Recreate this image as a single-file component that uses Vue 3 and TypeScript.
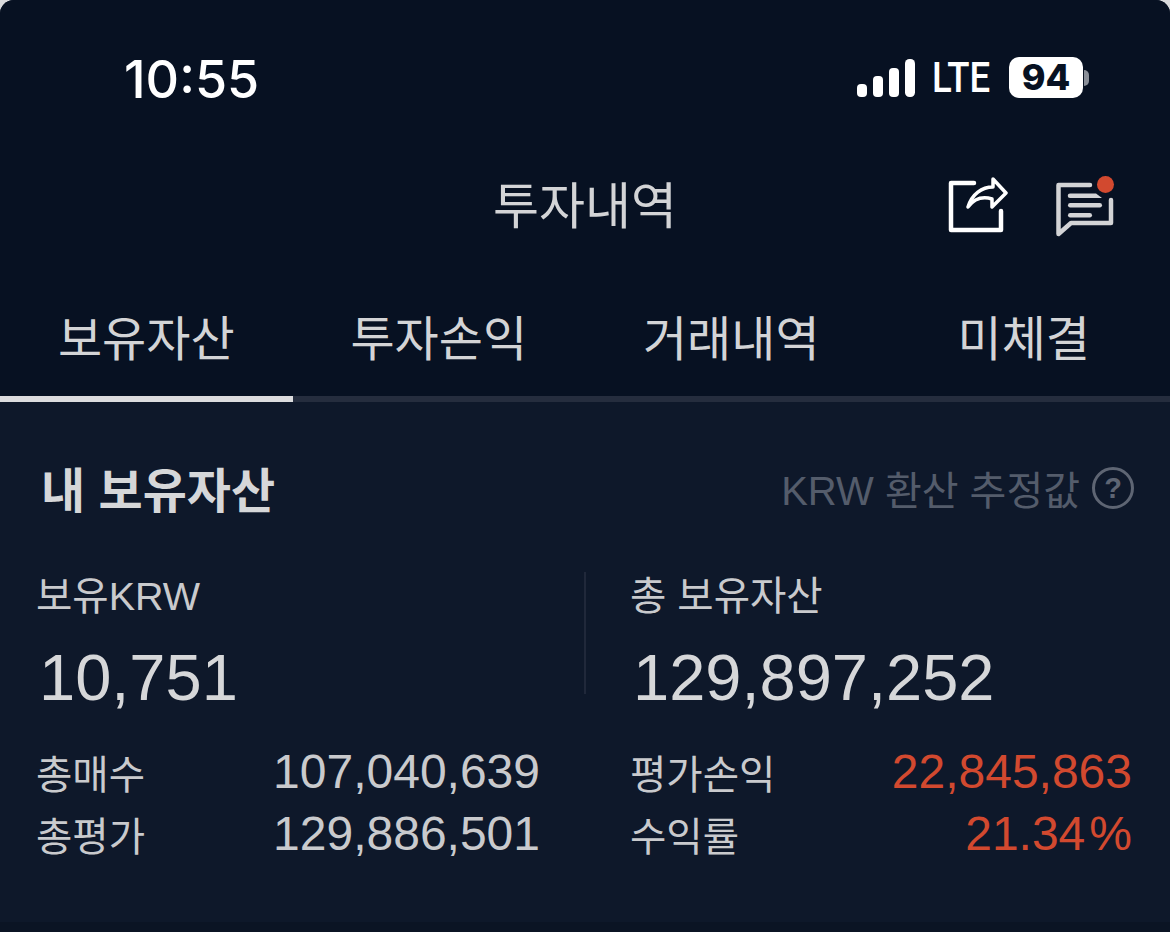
<template>
  <div class="screen">
    <header class="top">
      <div class="status">
        <span class="time">10:55</span>
        <div class="status-right">
          <svg class="signal" width="58" height="38" viewBox="0 0 58 38">
            <rect x="0" y="25" width="10" height="13" rx="4" />
            <rect x="16" y="17" width="10" height="21" rx="4" />
            <rect x="32" y="9" width="10" height="29" rx="4" />
            <rect x="48" y="0" width="10" height="38" rx="4.5" />
          </svg>
          <span class="lte">LTE</span>
          <div class="battery">
            <span class="level">94</span>
            <span class="nub"></span>
          </div>
        </div>
      </div>

      <div class="title-row">
        <h1 class="title">투자내역</h1>
        <div class="actions">
          <svg class="share" width="62" height="58" viewBox="0 0 62 58" fill="none" stroke="#fff" stroke-linecap="round" stroke-linejoin="round">
            <path d="M28 7H5v47h50V35" stroke-width="4.5" />
            <path d="M47 3L60 17 46 31V23C36 20 28 23 22 31 26 18 36 11 47 11z" stroke-width="3.5" />
          </svg>
          <div class="chat">
            <svg width="60" height="62" viewBox="0 0 60 62" fill="none">
              <path d="M36 9H4.5V58L17 47H57V24" stroke="#d3d4d6" stroke-width="4.5" stroke-linecap="round" stroke-linejoin="round" />
              <path d="M16 17.5h26l6 4.5H16a2.2 2.2 0 0 1 0-4.5z" fill="#d3d4d6" />
              <rect x="14" y="27" width="34" height="4.5" rx="2.2" fill="#d3d4d6" />
              <rect x="14" y="37" width="24" height="4.5" rx="2.2" fill="#d3d4d6" />
            </svg>
            <span class="dot"></span>
          </div>
        </div>
      </div>

      <nav class="tabs">
        <div
          v-for="(tab, i) in tabs"
          :key="tab"
          class="tab"
          :class="{ active: i === 0 }"
        >{{ tab }}</div>
      </nav>
    </header>

    <main class="content">
      <div class="section-head">
        <h2 class="section-title">내 보유자산</h2>
        <div class="hint">
          <span>KRW 환산 추정값</span>
          <span class="help">?</span>
        </div>
      </div>

      <div class="columns">
        <section class="col col-left">
          <div class="label">보유KRW</div>
          <div class="big">10,751</div>
          <div class="rows">
            <div v-for="row in leftRows" :key="row.name" class="row">
              <span class="row-name">{{ row.name }}</span>
              <span class="row-value">{{ row.value }}</span>
            </div>
          </div>
        </section>
        <section class="col col-right">
          <div class="label">총 보유자산</div>
          <div class="big">129,897,252</div>
          <div class="rows">
            <div v-for="row in rightRows" :key="row.name" class="row">
              <span class="row-name">{{ row.name }}</span>
              <span class="row-value up">{{ row.value }}</span>
            </div>
          </div>
        </section>
        <div class="divider"></div>
      </div>
    </main>
    <div class="bottom-edge"></div>
  </div>
</template>

<script setup lang="ts">
const tabs = ["보유자산", "투자손익", "거래내역", "미체결"]

const leftRows = [
  { name: "총매수", value: "107,040,639" },
  { name: "총평가", value: "129,886,501" },
]

const rightRows = [
  { name: "평가손익", value: "22,845,863" },
  { name: "수익률", value: "21.34\u200a%" },
]
</script>

<style>
html,
body {
  margin: 0;
  background: #d9dadc;
}
</style>

<style scoped>
.screen {
  width: 1170px;
  height: 932px;
  overflow: hidden;
  display: flex;
  flex-direction: column;
  background: #0e182a;
  border-radius: 14px 14px 0 0;
  font-family: "Liberation Sans", "Noto Sans CJK KR", sans-serif;
  color: #d6d7d9;
}

.top {
  height: 402px;
  flex: none;
  display: flex;
  flex-direction: column;
  background: #071122;
}

.status {
  height: 148px;
  flex: none;
  display: flex;
  justify-content: space-between;
  align-items: flex-start;
  padding: 54px 81px 0 124px;
  box-sizing: border-box;
}

.time {
  font-family: Inter, sans-serif;
  font-size: 52px;
  line-height: 52px;
  font-weight: 500;
  color: #fff;
}

.status-right {
  display: flex;
  align-items: center;
  padding-top: 3px;
}

.signal {
  fill: #fff;
  margin-right: 17px;
}

.lte {
  font-family: Roboto, sans-serif;
  font-weight: 500;
  font-size: 42px;
  line-height: 40px;
  color: #fff;
  transform: scaleX(0.87);
  transform-origin: left center;
  width: 67px;
}

.battery {
  display: flex;
  align-items: center;
  margin-left: 10px;
}

.level {
  width: 74px;
  height: 41px;
  border-radius: 10px;
  background: #fff;
  color: #071122;
  font-family: Inter, sans-serif;
  font-weight: 800;
  font-size: 36px;
  line-height: 41px;
  text-align: center;
}

.nub {
  width: 5px;
  height: 16px;
  background: #8a8f98;
  border-radius: 0 5px 5px 0;
  margin-left: 1px;
}

.title-row {
  height: 115px;
  flex: none;
  position: relative;
  display: flex;
  align-items: center;
  justify-content: center;
}

.title {
  margin: 2px 0 0;
  font-size: 50px;
  font-weight: 400;
  line-height: 60px;
  color: #d3d4d6;
}

.actions {
  position: absolute;
  right: 56px;
  top: 28px;
  display: flex;
  gap: 46px;
}

.chat {
  position: relative;
}

.dot {
  position: absolute;
  top: 0;
  right: 0;
  width: 17px;
  height: 17px;
  border-radius: 50%;
  background: #d2492f;
}

.tabs {
  flex: 1;
  display: grid;
  grid-template-columns: repeat(4, 1fr);
  border-bottom: 6px solid #252d3e;
}

.tab {
  font-size: 48px;
  line-height: 52px;
  margin-bottom: -6px;
  color: #d3d4d6;
  border-bottom: 6px solid transparent;
  display: flex;
  align-items: center;
  justify-content: center;
  padding-top: 20px;
  box-sizing: border-box;
}

.tab.active {
  border-bottom-color: #dcdcde;
}

.content {
  flex: 1;
  padding: 58px 36px 0;
  display: flex;
  flex-direction: column;
}

.section-head {
  display: flex;
  justify-content: space-between;
  align-items: center;
  height: 56px;
}

.section-title {
  margin: 0 0 3px 5px;
  font-size: 48px;
  font-weight: 700;
  color: #d6d7d9;
}

.hint {
  display: flex;
  align-items: center;
  gap: 12px;
  font-size: 40px;
  color: #545c6b;
}

.help {
  width: 36px;
  height: 36px;
  border: 3px solid #5e6573;
  border-radius: 50%;
  font-size: 29px;
  font-weight: 700;
  line-height: 36px;
  text-align: center;
  color: #5e6573;
}

.columns {
  position: relative;
  display: grid;
  grid-template-columns: 504px 504px;
  justify-content: space-between;
  margin-top: 52px;
}

.divider {
  position: absolute;
  left: 548px;
  top: 4px;
  width: 2px;
  height: 122px;
  background: #20283a;
}

.label {
  font-size: 39.5px;
  line-height: 56px;
  color: #c9cacd;
}

.big {
  margin: 14px 0 0 3px;
  font-size: 65px;
  line-height: 80px;
  color: #d6d7d9;
}

.rows {
  margin-top: 26px;
  display: flex;
  flex-direction: column;
  gap: 8px;
}

.row {
  display: flex;
  justify-content: space-between;
  align-items: center;
  height: 54px;
  font-size: 39.5px;
  color: #c9cacd;
}

.row-value {
  font-size: 48px;
  color: #c9cacd;
}

.row-value.up {
  color: #d2492f;
  margin-right: 1px;
}

.col-right .row {
  margin-right: 1px;
}

.bottom-edge {
  height: 10px;
  flex: none;
  background: #0b1424;
}
</style>
